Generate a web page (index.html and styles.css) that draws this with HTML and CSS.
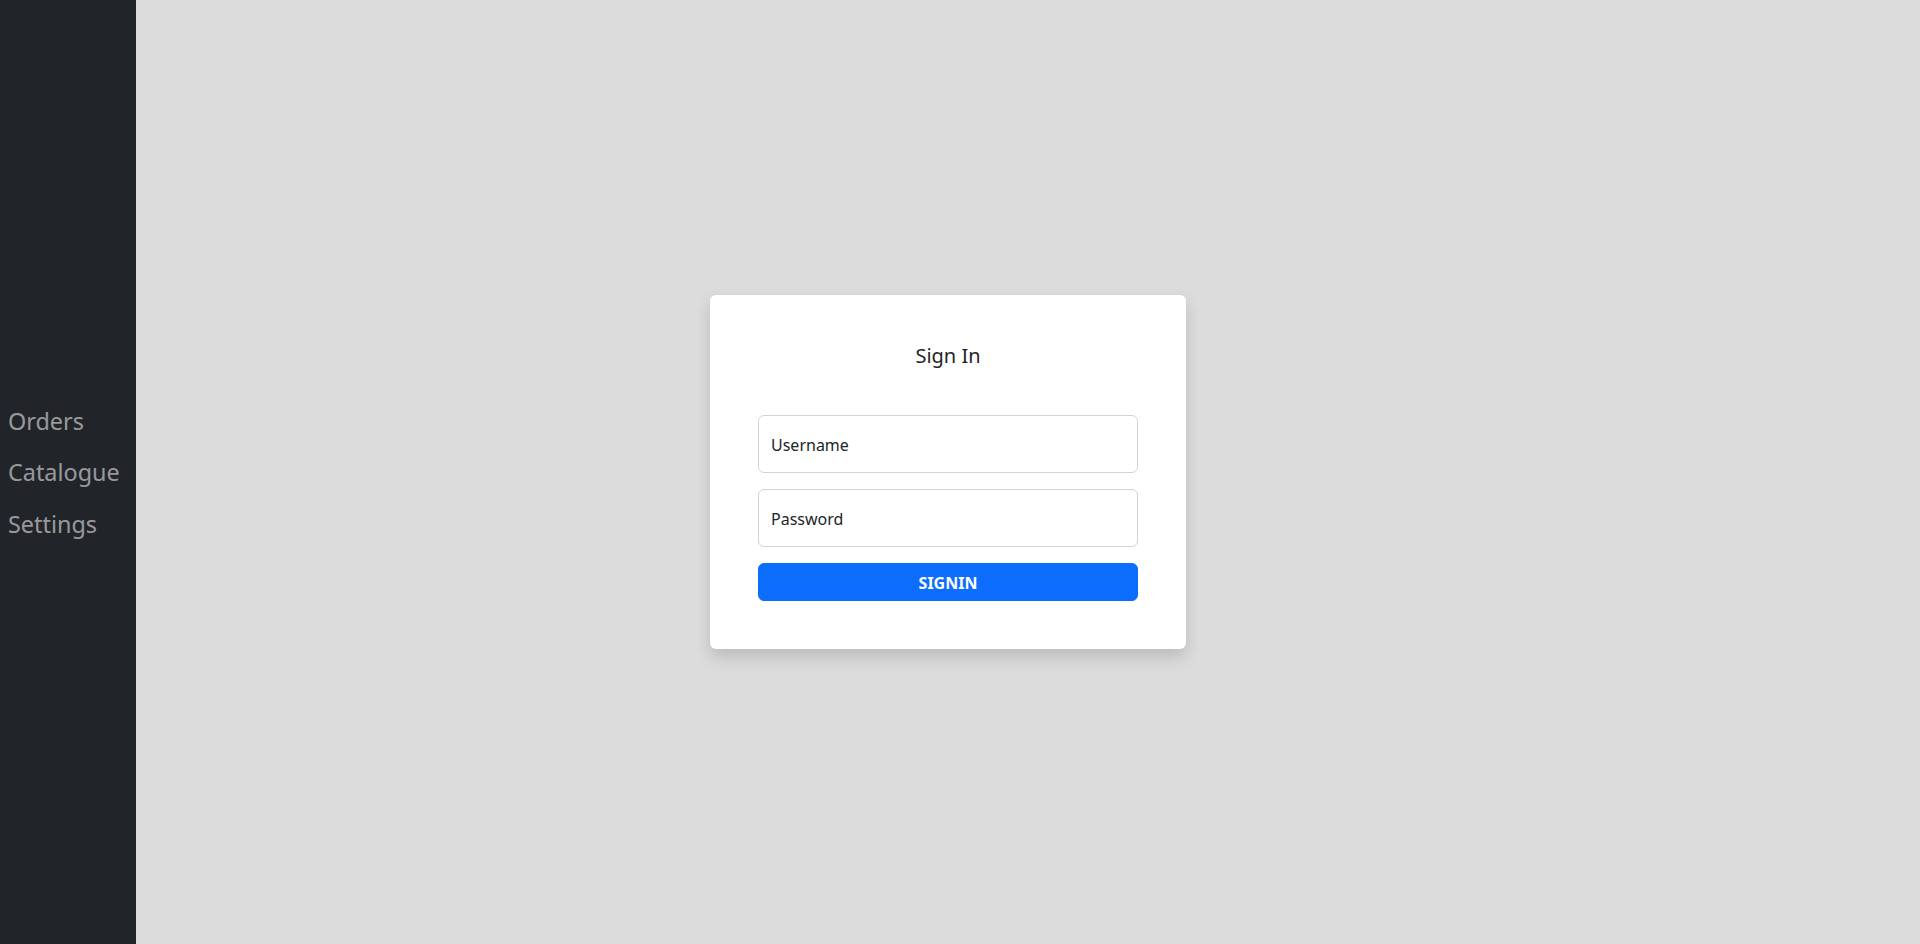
FILE: index.html
```html
<!DOCTYPE html>
<html>
<head>
    <meta charset="UTF-8">
    <meta name="viewport" content="width=device-width, initial-scale=1.0">
    <title>Sign In</title>
    <link rel="stylesheet" href="styles.css">
</head>
<body>
    <nav class="sidebar">
        <a href="#" class="nav-link">Orders</a>
        <a href="#" class="nav-link">Catalogue</a>
        <a href="#" class="nav-link">Settings</a>
    </nav>
    <main class="main">
        <form class="card" id="signinForm">
            <h5 class="card-title">Sign In</h5>
            <div class="field">
                <input type="text" id="username" placeholder="Username">
            </div>
            <div class="field">
                <input type="password" id="password" placeholder="Password">
            </div>
            <button type="submit" class="btn">SIGNIN</button>
        </form>
    </main>
</body>
</html>
```

FILE: styles.css
```css
* { box-sizing: border-box; }
html, body { height: 100%; }
body { margin: 0; display: flex; font-family: "Noto Sans", "Open Sans", sans-serif; color: #212529; background: #dcdcdc; }
.sidebar { width: 136px; flex-shrink: 0; background: #212529; display: flex; flex-direction: column; justify-content: center; padding-top: 2px; }
.nav-link { display: block; padding: 8px 8px; font-size: 23.4px; line-height: 35.5px; color: rgba(255, 255, 255, .55); text-decoration: none; }
.main { flex: 1; display: flex; align-items: center; justify-content: center; padding-right: 160px; }
.card { width: 476px; background: #fff; border-radius: 6px; padding: 49px 48px 48px; box-shadow: 0 8px 16px rgba(0, 0, 0, .15); }
.card-title { margin: 0 0 47px; font-size: 20px; font-weight: 400; line-height: 24px; text-align: center; }
.field { margin-bottom: 16px; }
.field input { display: block; width: 100%; height: 58px; padding: 17px 12px 15px; font-family: inherit; font-size: 16px; line-height: 24px; color: #212529; border: 1px solid #ced4da; border-radius: 6px; outline: none; }
.field input::placeholder { color: #212529; opacity: 1; }
.btn { display: block; width: 100%; padding: 7px 12px 5px; font-family: inherit; font-size: 16px; font-weight: 700; line-height: 24px; color: #fff; background: #0d6efd; border: 1px solid #0d6efd; border-radius: 6px; cursor: pointer; }
```
